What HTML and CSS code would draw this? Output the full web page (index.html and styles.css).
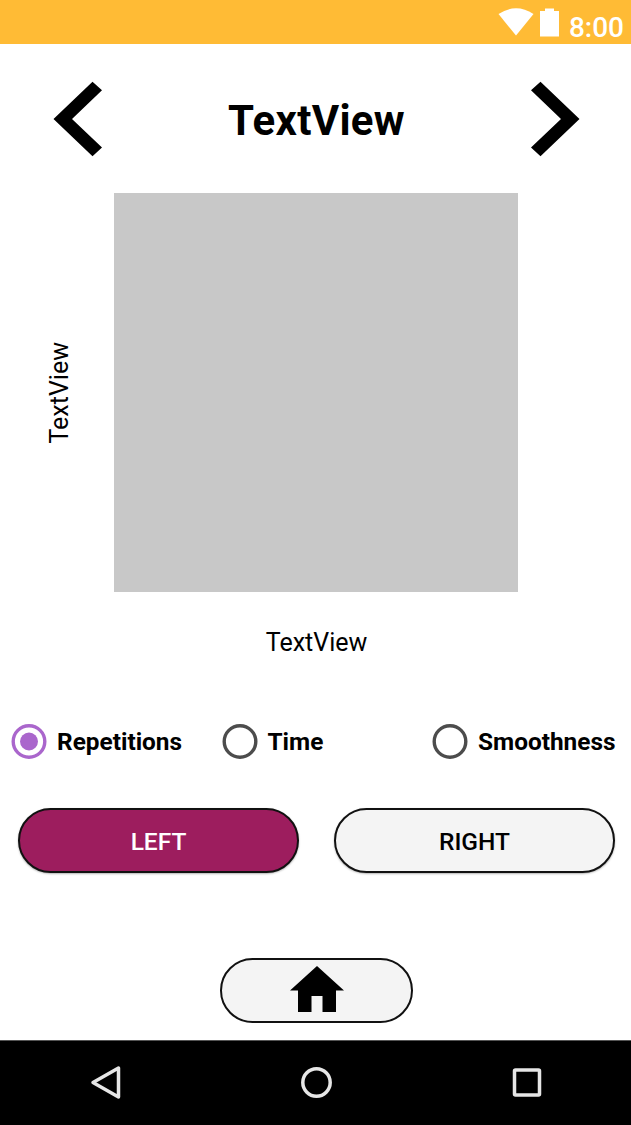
FILE: index.html
```html
<!DOCTYPE html>
<html lang="en">
<head>
<meta charset="utf-8">
<title>Results</title>
<link rel="stylesheet" href="styles.css">
</head>
<body>
<div class="screen">
  <header class="status-bar">
    <svg class="wifi" width="36" height="28" viewBox="0 0 36 28"><path d="M0.500 6Q18-5.500 35.500 6L18 27.500Z" fill="#fff"/></svg>
    <svg class="battery" width="19" height="29" viewBox="0 0 19 29"><path d="M0 3H5V0.500H14V3H19V28.500H0Z" fill="#fff"/></svg>
    <span class="clock">8:00</span>
  </header>
  <main class="content">
    <div class="title-row">
      <svg width="50" height="76" viewBox="0 0 50 76"><path d="M.5 38L39.500 .7L49 9.300L19 38L49 66.500L39.500 75.300Z"/></svg>
      <h1 class="title">TextView</h1>
      <svg width="50" height="76" viewBox="0 0 50 76"><path d="M49.500 38L10.500 .7L1 9.300L31 38L1 66.500L10.500 75.300Z"/></svg>
    </div>
    <div class="chart-row">
      <div class="axis-y"><span class="axis-y-text">TextView</span></div>
      <div class="chart"></div>
    </div>
    <div class="axis-x"><span class="axis-text">TextView</span></div>
    <div class="radios">
      <label class="option"><svg class="radio radio-on" width="36" height="36" viewBox="0 0 36 36"><circle class="ring" cx="18" cy="18.500" r="15.800"/><circle class="dot" cx="18" cy="18.500" r="9"/></svg><span class="label">Repetitions</span></label>
      <label class="option"><svg class="radio" width="36" height="36" viewBox="0 0 36 36"><circle class="ring" cx="18" cy="18.500" r="15.800"/></svg><span class="label">Time</span></label>
      <label class="option"><svg class="radio" width="36" height="36" viewBox="0 0 36 36"><circle class="ring" cx="18" cy="18.500" r="15.800"/></svg><span class="label">Smoothness</span></label>
    </div>
    <div class="sides">
      <button class="pill pill-active">LEFT</button>
      <button class="pill">RIGHT</button>
    </div>
    <button class="pill home"><svg width="54" height="47" viewBox="0 0 54 47"><path d="M27 0L54 24.500H46V46H32.500V30H21.500V46H8V24.500H0Z"/></svg></button>
  </main>
  <nav class="nav-bar">
    <svg width="36" height="36" viewBox="0 0 36 36"><path d="M5 17.500L30.500 3V32Z"/></svg>
    <svg width="36" height="36" viewBox="0 0 36 36"><circle cx="17.500" cy="17.500" r="13.700"/></svg>
    <svg width="36" height="36" viewBox="0 0 36 36"><rect x="5.500" y="5" width="25" height="25" rx="1"/></svg>
  </nav>
</div>
</body>
</html>
```
FILE: styles.css
```css
* { box-sizing: border-box; }
body { margin: 0; background: #fff; font-family: Roboto, sans-serif; color: #000; }
svg { display: block; flex: none; }
.screen { width: 631px; height: 1125px; display: flex; flex-direction: column; overflow: hidden; }
.status-bar { height: 44px; background: #ffbb35; display: flex; justify-content: flex-end; align-items: flex-start; padding: 8px 7px 0 0; }
.wifi { margin-right: 6px; }
.battery { margin-right: 10px; }
.clock { color: #fff; font-size: 28px; font-weight: 500; line-height: 40px; height: 36px; }
.content { flex: 1; display: flex; flex-direction: column; }
.title-row { display: flex; justify-content: space-between; align-items: center; height: 76px; margin: 37px 51px 0 53px; }
.title { margin: 3px 0 0; font-size: 42px; line-height: 50px; font-weight: 700; letter-spacing: .3px; }
.chart-row { display: flex; height: 399px; margin-top: 36px; }
.axis-y { width: 114px; padding-left: 5px; display: flex; align-items: center; justify-content: center; }
.axis-y-text { writing-mode: vertical-rl; transform: rotate(180deg); font-size: 25px; line-height: 30px; }
.chart { width: 404px; background: #c8c8c8; }
.axis-x { height: 30px; margin-top: 36px; text-align: center; padding-left: 2px; }
.axis-text { font-size: 25px; line-height: 30px; }
.radios { display: grid; grid-template-columns: 210.500px 210.500px 1fr; height: 36px; margin: 65px 0 0 11px; }
.option { display: flex; align-items: center; gap: 10px; }
.ring { fill: none; stroke: #4c4c4c; stroke-width: 3.400; }
.radio-on .ring { stroke: #aa66cc; }
.dot { fill: #aa66cc; }
.label { font-size: 24.400px; line-height: 30px; padding-top: 2px; font-weight: 700; }
.pill { height: 65px; padding: 2px 0 0; border: 2px solid #111; border-radius: 33px; background: #f4f4f4; color: #000; font: 500 24.500px/30px Roboto, sans-serif; display: flex; align-items: center; justify-content: center; box-shadow: 0 1px 2px rgba(0,0,0,.3); }
.pill-active { background: #9d1d5e; color: #fff; }
.sides { display: grid; grid-template-columns: 281px 281px; gap: 35px; margin: 49px 0 0 18px; }
.home { width: 193px; margin: 85px 0 0 220px; padding: 0 0 2px; box-shadow: none; }
.nav-bar { height: 85px; background: #000; border-top: 1px solid #555; display: flex; justify-content: space-between; padding: 24px 86px 0 88px; }
.nav-bar svg { fill: none; stroke: #e6e6e6; stroke-width: 3.500; stroke-linejoin: round; }
```
